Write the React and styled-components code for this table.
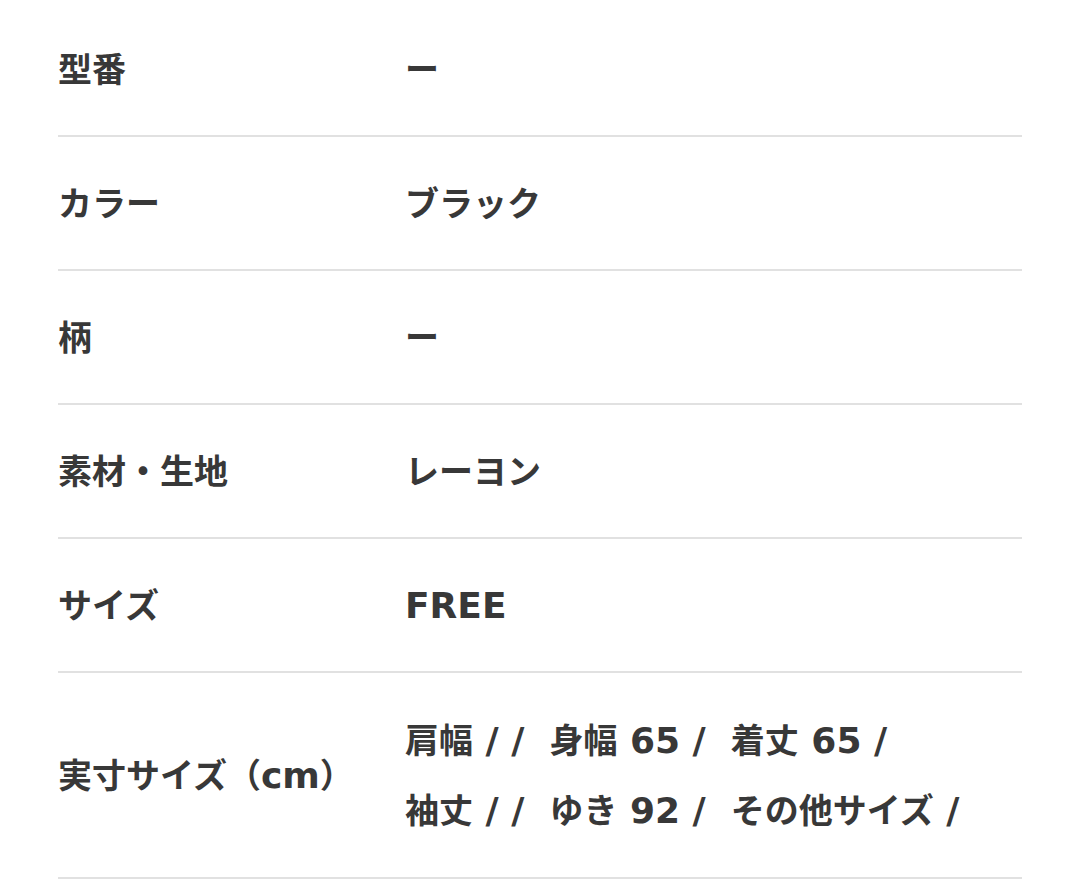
import React from "react";
import styled, { createGlobalStyle } from "styled-components";

const specs = [
  { label: "型番", value: ["ー"] },
  { label: "カラー", value: ["ブラック"] },
  { label: "柄", value: ["ー"] },
  { label: "素材・生地", value: ["レーヨン"] },
  { label: "サイズ", value: ["FREE"] },
  {
    label: "実寸サイズ（cm）",
    value: ["肩幅 / /  身幅 65 /  着丈 65 /", "袖丈 / /  ゆき 92 /  その他サイズ /"],
    tall: true
  }
];

// latin runs get the wider face, like the original device font
const mixed = text =>
  text.split(/([\x20-\x7e]+)/).map((part, i) =>
    /[\x20-\x7e]/.test(part) ? <Latin key={i}>{part}</Latin> : part
  );

const App = () => (
  <>
    <GlobalStyle />
    <Table>
      {specs.map(spec => (
        <Row key={spec.label} tall={spec.tall}>
          <Label>{mixed(spec.label)}</Label>
          <Value>
            {spec.value.map(line => (
              <Line key={line}>{mixed(line)}</Line>
            ))}
          </Value>
        </Row>
      ))}
    </Table>
  </>
);

export default App;

const GlobalStyle = createGlobalStyle`
  body {
    margin: 0;
    background: #ffffff;
    font-family: "Noto Sans CJK JP", "Liberation Sans", sans-serif;
  }
`;

const Table = styled.div`
  margin: 0 58px;
  padding-top: 3px;
  color: #383838;
  font-size: 34px;
  font-weight: 700;
`;

const Row = styled.div.withConfig({ shouldForwardProp: p => p !== "tall" })`
  display: grid;
  grid-template-columns: 347px 1fr;
  align-items: center;
  padding: ${p => (p.tall ? "31px 0 33px" : "30px 0 32px")};
  line-height: 70px;
  border-bottom: 2px solid #e1e1e1;
`;

const Label = styled.div`
  white-space: nowrap;
`;

const Value = styled.div`
  display: flex;
  flex-direction: column;
`;

const Line = styled.div`
  white-space: pre;
`;

const Latin = styled.span`
  font-family: "DejaVu Sans", "Liberation Sans", sans-serif;
  font-size: 36px;
  line-height: 1;
`;
